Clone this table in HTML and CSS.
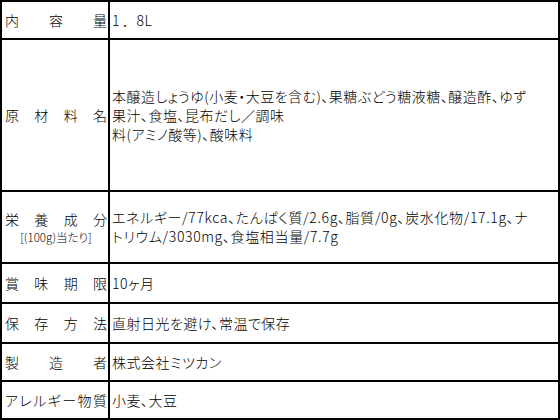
FILE: index.html
```html
<!DOCTYPE html>
<html lang="ja">
<head>
<meta charset="utf-8">
<title>商品情報</title>
<link rel="stylesheet" href="styles.css">
</head>
<body>
<div class="spec">
  <div class="label"><span>内</span><span>容</span><span>量</span></div>
  <div class="value">1<span class="fw">．</span>8L</div>

  <div class="label"><span>原</span><span>材</span><span>料</span><span>名</span></div>
  <div class="value">本醸造しょうゆ(小麦・大豆を含む)、果糖ぶどう糖液糖、醸造酢、ゆず<br>果汁、食塩、昆布だし／調味<br>料(アミノ酸等)、酸味料</div>

  <div class="label stack">
    <div class="spread"><span>栄</span><span>養</span><span>成</span><span>分</span></div>
    <div class="sub">[(100g)当たり]</div>
  </div>
  <div class="value nutri">エネルギー/77kca、たんぱく質/2.6g、脂質/0g、炭水化物/17.1g、ナ<br>トリウム/3030mg、食塩相当量/7.7g</div>

  <div class="label"><span>賞</span><span>味</span><span>期</span><span>限</span></div>
  <div class="value">10ヶ月</div>

  <div class="label"><span>保</span><span>存</span><span>方</span><span>法</span></div>
  <div class="value">直射日光を避け、常温で保存</div>

  <div class="label"><span>製</span><span>造</span><span>者</span></div>
  <div class="value">株式会社ミツカン</div>

  <div class="label"><span>ア</span><span>レ</span><span>ル</span><span>ギ</span><span>ー</span><span>物</span><span>質</span></div>
  <div class="value">小麦、大豆</div>
</div>
</body>
</html>
```

FILE: styles.css
```css
html, body {
  margin: 0;
  padding: 0;
  background: #fff;
}

.spec {
  display: grid;
  grid-template-columns: 106px 448px;
  grid-template-rows: 36px 150px 70px 38px 38px 36px 36px;
  gap: 2px;
  padding: 2px;
  width: 556px;
  background: #000;
  font-family: "Noto Sans CJK JP", "Noto Sans", sans-serif;
  font-size: 14px;
  font-weight: 300;
  line-height: 19px;
  color: #000;
  font-feature-settings: "palt";
}

.label,
.value {
  background: #fff;
  display: flex;
  align-items: center;
  white-space: nowrap;
}

.label {
  justify-content: space-between;
  padding: 0 1px 0 3px;
}

.value {
  padding-left: 2px;
  letter-spacing: 0.5px;
}

.nutri {
  letter-spacing: 0.65px;
}

.fw {
  font-feature-settings: normal;
  padding-left: 2px;
}

.stack {
  flex-direction: column;
  justify-content: center;
  align-items: stretch;
}

.spread {
  display: flex;
  justify-content: space-between;
}

.sub {
  font-size: 11.5px;
  line-height: 16px;
  text-align: center;
}
```
